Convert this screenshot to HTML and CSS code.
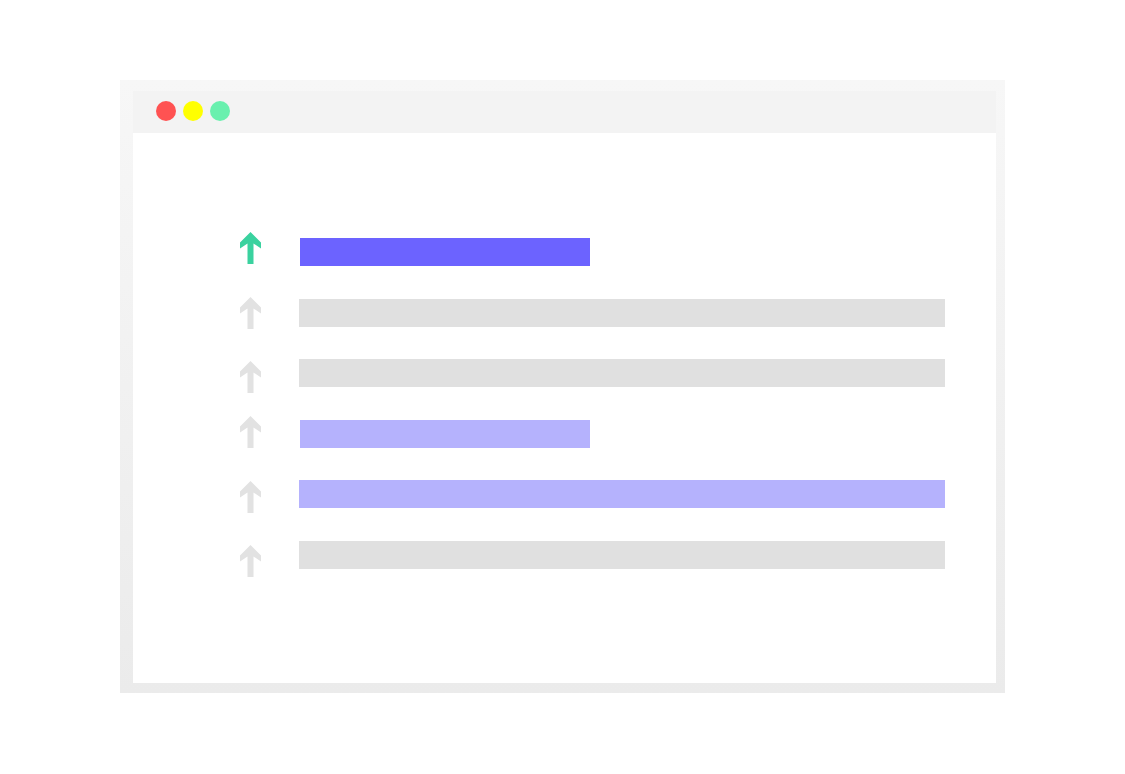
FILE: index.html
```html
<!DOCTYPE html>
<html lang="en">
<head>
<meta charset="utf-8">
<title>Ranking list</title>
<link rel="stylesheet" href="styles.css">
</head>
<body>
<div class="window">
  <div class="titlebar">
    <span class="dot dot--red"></span>
    <span class="dot dot--yellow"></span>
    <span class="dot dot--green"></span>
  </div>
  <div class="content">
    <div class="arrows">
      <svg class="arrow arrow--active" viewBox="0 0 21 32"><polygon points="10.5,0 21,10.5 21,16.5 13.5,11.5 13.5,32 7.5,32 7.5,11.5 0,16.5 0,10.5"/></svg>
      <svg class="arrow" viewBox="0 0 21 32"><polygon points="10.5,0 21,10.5 21,16.5 13.5,11.5 13.5,32 7.5,32 7.5,11.5 0,16.5 0,10.5"/></svg>
      <svg class="arrow" viewBox="0 0 21 32"><polygon points="10.5,0 21,10.5 21,16.5 13.5,11.5 13.5,32 7.5,32 7.5,11.5 0,16.5 0,10.5"/></svg>
      <svg class="arrow arrow--raised" viewBox="0 0 21 32"><polygon points="10.5,0 21,10.5 21,16.5 13.5,11.5 13.5,32 7.5,32 7.5,11.5 0,16.5 0,10.5"/></svg>
      <svg class="arrow" viewBox="0 0 21 32"><polygon points="10.5,0 21,10.5 21,16.5 13.5,11.5 13.5,32 7.5,32 7.5,11.5 0,16.5 0,10.5"/></svg>
      <svg class="arrow" viewBox="0 0 21 32"><polygon points="10.5,0 21,10.5 21,16.5 13.5,11.5 13.5,32 7.5,32 7.5,11.5 0,16.5 0,10.5"/></svg>
    </div>
    <div class="bars">
      <div class="bar bar--short bar--primary"></div>
      <div class="bar bar--gray"></div>
      <div class="bar bar--gray"></div>
      <div class="bar bar--short bar--light"></div>
      <div class="bar bar--light"></div>
      <div class="bar bar--gray"></div>
    </div>
  </div>
</div>
</body>
</html>
```

FILE: styles.css
```css
html, body {
  margin: 0;
  padding: 0;
  background: #ffffff;
}

body {
  width: 1125px;
  height: 774px;
  overflow: hidden;
  font-family: "Liberation Sans", Arial, sans-serif;
}

.window {
  box-sizing: border-box;
  margin: 80px 0 0 120px;
  width: 885px;
  height: 613px;
  padding: 11px 9px 10px 13px;
  background: linear-gradient(#f7f7f7, #ebebeb);
  display: flex;
  flex-direction: column;
}

.titlebar {
  box-sizing: border-box;
  height: 42px;
  background: #f3f3f3;
  display: flex;
  align-items: flex-start;
  gap: 7px;
  padding: 10px 0 0 23px;
}

.dot {
  width: 20px;
  height: 20px;
  border-radius: 50%;
}

.dot--red { background: #ff5252; }
.dot--yellow { background: #ffff00; }
.dot--green { background: #69f0ae; }

.content {
  flex: 1;
  background: #ffffff;
  display: flex;
  align-items: flex-start;
  padding-left: 107px;
}

.arrows {
  display: flex;
  flex-direction: column;
  gap: 32.5px;
  padding-top: 99px;
  width: 21px;
}

.arrow {
  display: block;
  width: 21px;
  height: 32px;
  fill: #e2e2e2;
}

.arrow--active {
  fill: #3ad29f;
}

.arrow--raised {
  margin-top: -9.5px;
}

.bars {
  display: flex;
  flex-direction: column;
  gap: 32.5px;
  padding-top: 105px;
  margin-left: 38px;
}

.bar {
  width: 646px;
  height: 28px;
}

.bar--short {
  width: 289.5px;
  margin-left: 1px;
}

.bar--primary { background: #6c63ff; }
.bar--light { background: #b5b2fd; }
.bar--gray { background: #e0e0e0; }
```
